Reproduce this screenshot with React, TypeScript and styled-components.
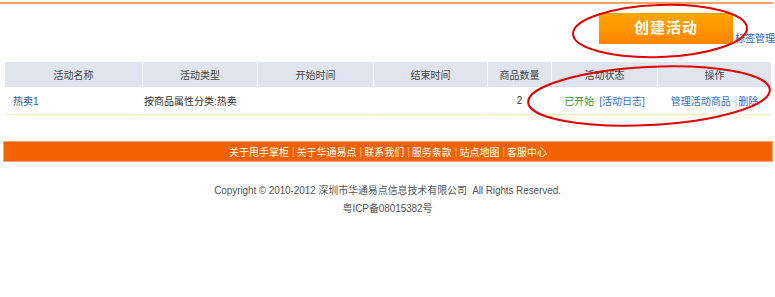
import React from 'react';
import styled, {createGlobalStyle} from "styled-components";

const GlobalStyle = createGlobalStyle`
  html, body {
    margin: 0;
    padding: 0;
    background: #fff;
  }
  body {
    font-family: "Liberation Sans", "Noto Sans CJK SC", sans-serif;
    font-size: 10px;
    color: #444;
  }
`

type Activity = {
    name: string
    type: string
    start: string
    end: string
    count: number
}

const columns = ['活动名称', '活动类型', '开始时间', '结束时间', '商品数量', '活动状态', '操作']

const activities: Array<Activity> = [
    {name: '热卖1', type: '按商品属性分类:热卖', start: '', end: '', count: 2},
]

const footerLinks = ['关于甩手掌柜', '关于华通易点', '联系我们', '服务条款', '站点地图', '客服中心']

export default function App() {
    return (
        <Page>
            <GlobalStyle/>
            <TopLine/>
            <ActionBar>
                <CreateButton>创建活动</CreateButton>
                <TagLink>标签管理</TagLink>
            </ActionBar>
            <Table>
                <Row>
                    {columns.map((title) => <HeadCell key={title}>{title}</HeadCell>)}
                </Row>
                {activities.map((item) => (
                    <Row key={item.name}>
                        <Cell align={'left'}><NameLink>{item.name}</NameLink></Cell>
                        <Cell align={'left'}>{item.type}</Cell>
                        <Cell>{item.start}</Cell>
                        <Cell>{item.end}</Cell>
                        <Cell>{item.count}</Cell>
                        <Cell>
                            <Status>已开始</Status>
                            <BlueLink>[活动日志]</BlueLink>
                        </Cell>
                        <Cell>
                            <BlueLink>管理活动商品</BlueLink>
                            <Divider>|</Divider>
                            <BlueLink>删除</BlueLink>
                        </Cell>
                    </Row>
                ))}
            </Table>
            <FooterBar>
                {footerLinks.map((link, i) => (
                    <React.Fragment key={link}>
                        {i > 0 && <FooterSep>|</FooterSep>}
                        <FooterLink>{link}</FooterLink>
                    </React.Fragment>
                ))}
            </FooterBar>
            <Copyright>
                <span>Copyright © 2010-2012 深圳市华通易点信息技术有限公司&nbsp; All Rights Reserved.</span>
                <span>粤ICP备08015382号</span>
            </Copyright>
            <Marks viewBox="0 0 775 297" width={775} height={297}>
                <ellipse cx={660} cy={31} rx={87} ry={26} transform="rotate(-2 660 31)"/>
                <ellipse cx={649} cy={96} rx={121} ry={29} transform="rotate(-3 649 96)"/>
            </Marks>
        </Page>
    );
}

const Page = styled.div`
  position: relative;
  width: 775px;
  height: 297px;
  overflow: hidden;
`
const TopLine = styled.div`
  margin-top: 2px;
  width: 773px;
  height: 2px;
  background: #f8a06a;
`
const ActionBar = styled.div`
  display: flex;
  justify-content: flex-end;
  align-items: flex-end;
  gap: 2px;
  padding: 9px 0 0 0;
  height: 31px;
`
const CreateButton = styled.button`
  width: 134px;
  height: 31px;
  border: none;
  padding: 0 0 4px 0;
  background: linear-gradient(#ffa700, #ff8400);
  color: #fff;
  font-family: "Noto Sans CJK SC", sans-serif;
  font-size: 15px;
  font-weight: bold;
  letter-spacing: 1px;
  cursor: pointer;
`
const TagLink = styled.a`
  color: #1d62d0;
  font-family: "Noto Sans CJK SC", sans-serif;
  font-size: 10px;
  line-height: 10px;
  padding-bottom: 1px;
  white-space: nowrap;
`
const Table = styled.div`
  margin: 18px 0 0 5px;
  display: flex;
  flex-direction: column;
`
const Row = styled.div`
  display: grid;
  grid-template-columns: 137px 114px 115px 113px 63px 105px 113px;
  column-gap: 1px;
`
const HeadCell = styled.div`
  height: 25px;
  display: flex;
  align-items: center;
  justify-content: center;
  background: #dfe4ee;
  color: #444;
`
const Cell = styled.div<{ align?: 'left' | 'center' }>`
  height: 27px;
  display: flex;
  align-items: center;
  justify-content: ${(p) => p.align === 'left' ? 'flex-start' : 'center'};
  padding-left: ${(p) => p.align === 'left' ? '8px' : '0'};
  gap: 5px;
  border-bottom: 1px solid #fdebc6;
  color: #333;
  &:nth-child(2) {
    padding-left: 1px;
  }
`
const NameLink = styled.a`
  color: #2b5a9a;
`
const Status = styled.span`
  color: #2f9a2f;
`
const BlueLink = styled.a`
  color: #2f6fd0;
`
const Divider = styled.span`
  color: #bbb;
  margin: 0 -4px 0 -1px;
`
const FooterBar = styled.nav`
  margin: 26px 2px 0 3px;
  height: 19px;
  border: 1px solid #fba46c;
  background: #f26300;
  display: flex;
  justify-content: center;
  align-items: center;
  color: #fff;
`
const FooterLink = styled.a`
  color: #fff;
`
const FooterSep = styled.span`
  color: #f9b48a;
  margin: 0 2px 0 3px;
`
const Copyright = styled.footer`
  margin-top: 23px;
  display: flex;
  flex-direction: column;
  align-items: center;
  gap: 6px;
  color: #555;
  line-height: 12px;
  letter-spacing: -0.1px;
`
const Marks = styled.svg`
  position: absolute;
  left: 0;
  top: 0;
  pointer-events: none;
  fill: none;
  stroke: #e10000;
  stroke-width: 2;
`
